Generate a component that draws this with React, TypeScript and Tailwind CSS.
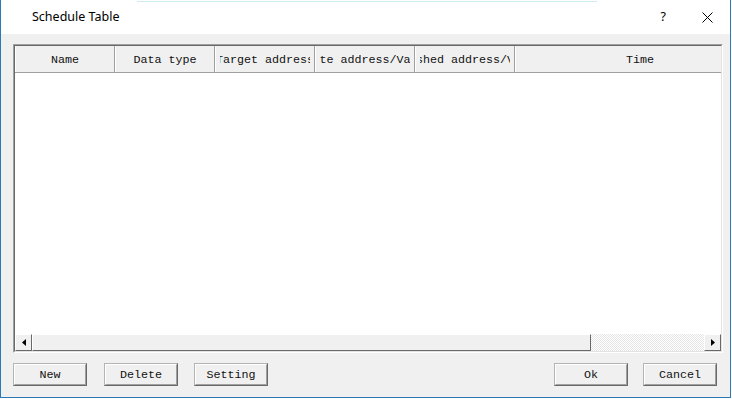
import React from "react";

const mono = { fontFamily: '"Liberation Mono", "DejaVu Sans Mono", monospace' };

function HeaderCell({ text, w }: { text: string; w: string }) {
  return (
    <div className={`${w} h-full border-l border-l-white border-r border-r-[#a0a0a0] bg-[#f0f0f0] px-[4px]`}>
      <div className="h-full w-full overflow-hidden flex items-center justify-center whitespace-nowrap text-[11.7px] text-[#111] pt-[3px]" style={mono}>
        <span className="flex-none">{text}</span>
      </div>
    </div>
  );
}

function Btn({ label }: { label: string }) {
  return (
    <div className="w-[74px] h-[23px] border-t border-l border-t-[#b4b4b4] border-l-[#b4b4b4] border-b border-r border-b-[#696969] border-r-[#696969]">
      <div className="w-full h-full border-t border-l border-t-white border-l-white border-b border-r border-b-[#a0a0a0] border-r-[#a0a0a0] bg-[#f0f0f0] flex items-center justify-center text-[11.7px] text-[#111] pt-[3px]" style={mono}>
        {label}
      </div>
    </div>
  );
}

function ArrowBtn({ dir }: { dir: "left" | "right" }) {
  return (
    <div className="w-[17px] h-full flex-none border-t border-l border-t-white border-l-white border-b border-r border-b-[#696969] border-r-[#696969] bg-[#f0f0f0] flex items-center justify-center">
      <svg width="4" height="7" viewBox="0 0 4 7">
        {dir === "left" ? <path d="M4 0 L0 3.5 L4 7 Z" fill="#000" /> : <path d="M0 0 L4 3.5 L0 7 Z" fill="#000" />}
      </svg>
    </div>
  );
}

export default function App() {
  return (
    <div className="w-[732px] h-[399px] bg-white relative">
      <div className="absolute top-[1px] left-[137px] w-[460px] h-[1px] bg-[#cdeaf5]" />
      <div className="w-[731px] h-[398px] border-l border-r border-b border-[#2b7ab8] flex flex-col">
        <div className="h-[34px] flex-none bg-white flex items-center pl-[31px] pr-[16px]">
          <span className="text-[12.5px] text-black" style={{ fontFamily: '"Noto Sans", "Open Sans", sans-serif' }}>
            Schedule Table
          </span>
          <div className="flex-1" />
          <span className="text-[12.5px] text-black mr-[36px]" style={{ fontFamily: '"Noto Sans", "Open Sans", sans-serif' }}>?</span>
          <svg width="11" height="11" viewBox="0 0 11 11" className="mr-[1px]">
            <path d="M0.5 0.5 L10.5 10.5 M10.5 0.5 L0.5 10.5" stroke="#000" strokeWidth="1" />
          </svg>
        </div>
        <div className="flex-1 bg-[#f0f0f0] pl-[12px] pt-[10px]">
          <div className="w-[710px] h-[309px] border-t border-l border-t-[#a0a0a0] border-l-[#a0a0a0] border-b border-r border-b-white border-r-white">
            <div className="w-full h-full border-t border-l border-t-[#696969] border-l-[#696969] border-b border-r border-b-[#e3e3e3] border-r-[#e3e3e3] bg-white flex flex-col overflow-hidden">
              <div className="h-[27px] flex-none flex border-b border-b-[#a0a0a0] overflow-hidden">
                <HeaderCell text="Name" w="w-[100px] flex-none" />
                <HeaderCell text="Data type" w="w-[100px] flex-none" />
                <HeaderCell text="Target address" w="w-[100px] flex-none" />
                <HeaderCell text="Write address/Value" w="w-[100px] flex-none" />
                <HeaderCell text="Finished address/Value" w="w-[100px] flex-none" />
                <HeaderCell text="Time" w="w-[250px] flex-none" />
              </div>
              <div className="flex-1 bg-white" />
              <div className="h-[17px] flex-none flex">
                <ArrowBtn dir="left" />
                <div className="w-[559px] h-full flex-none border-t border-l border-t-white border-l-white border-b border-r border-b-[#696969] border-r-[#696969] bg-[#f0f0f0]" />
                <div className="flex-1 h-full bg-[repeating-conic-gradient(#e6e6e6_0%_25%,#ffffff_0%_50%)] [background-size:2px_2px]" />
                <ArrowBtn dir="right" />
              </div>
            </div>
          </div>
          <div className="mt-[10px] flex w-[704px]">
            <Btn label="New" />
            <div className="w-[17px]" />
            <Btn label="Delete" />
            <div className="w-[16px]" />
            <Btn label="Setting" />
            <div className="flex-1" />
            <Btn label="Ok" />
            <div className="w-[15px]" />
            <Btn label="Cancel" />
          </div>
        </div>
      </div>
    </div>
  );
}
